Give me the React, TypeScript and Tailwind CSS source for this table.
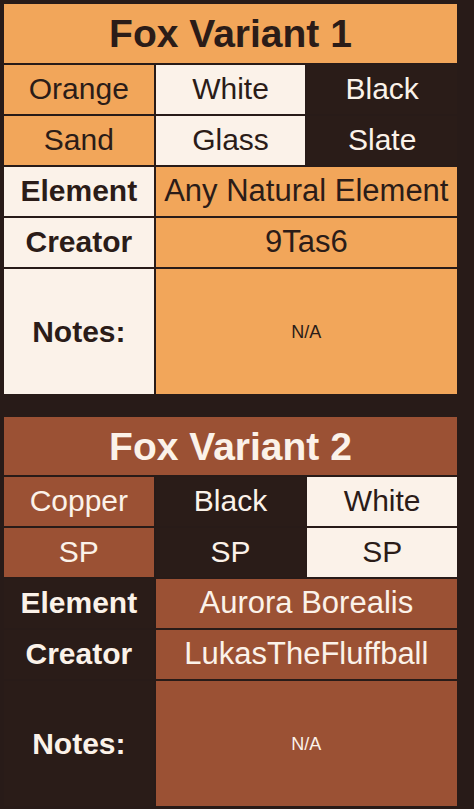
const ORANGE = "bg-[#f2a65a] text-[#2b1c18]";
const LIGHT = "bg-[#fbf2e9] text-[#2b1c18]";
const DARK = "bg-[#2a1c18] text-[#fbf2e9]";
const COPPER = "bg-[#9b5134] text-[#fbf2e9]";

type Variant = {
  title: string;
  headerClass: string;
  colours: [string, string][];
  shades: [string, string][];
  labelClass: string;
  valueClass: string;
  element: string;
  creator: string;
  headerHeight: string;
};

const variants: Variant[] = [
  {
    title: "Fox Variant 1",
    headerClass: ORANGE,
    colours: [
      ["Orange", ORANGE],
      ["White", LIGHT],
      ["Black", DARK],
    ],
    shades: [
      ["Sand", ORANGE],
      ["Glass", LIGHT],
      ["Slate", DARK],
    ],
    labelClass: LIGHT,
    valueClass: ORANGE,
    element: "Any Natural Element",
    creator: "9Tas6",
    headerHeight: "h-[59px]",
  },
  {
    title: "Fox Variant 2",
    headerClass: COPPER,
    colours: [
      ["Copper", COPPER],
      ["Black", DARK],
      ["White", LIGHT],
    ],
    shades: [
      ["SP", COPPER],
      ["SP", DARK],
      ["SP", LIGHT],
    ],
    labelClass: DARK,
    valueClass: COPPER,
    element: "Aurora Borealis",
    creator: "LukasTheFluffball",
    headerHeight: "h-[58px]",
  },
];

function VariantTable({ v }: { v: Variant }) {
  return (
    <div className="grid w-[453px] grid-cols-3 gap-[2px]">
      <div
        className={`col-span-3 flex items-center justify-center text-[39px] font-bold ${v.headerHeight} ${v.headerClass}`}
      >
        {v.title}
      </div>
      {[...v.colours, ...v.shades].map(([name, cls], i) => (
        <div
          key={i}
          className={`flex h-[49px] items-center justify-center pb-[2px] text-[30px] ${cls}`}
        >
          {name}
        </div>
      ))}
      <div className={`flex h-[49px] items-center justify-center pb-[2px] text-[30px] font-bold ${v.labelClass}`}>
        Element
      </div>
      <div className={`col-span-2 flex h-[49px] items-center justify-center pb-[2px] text-[31px] ${v.valueClass}`}>
        {v.element}
      </div>
      <div className={`flex h-[49px] items-center justify-center pb-[2px] text-[30px] font-bold ${v.labelClass}`}>
        Creator
      </div>
      <div className={`col-span-2 flex h-[49px] items-center justify-center pb-[2px] text-[31px] ${v.valueClass}`}>
        {v.creator}
      </div>
      <div className={`flex h-[125px] items-center justify-center text-[30px] font-bold ${v.labelClass}`}>
        Notes:
      </div>
      <div className={`col-span-2 flex h-[125px] items-center justify-center text-[18px] ${v.valueClass}`}>
        N/A
      </div>
    </div>
  );
}

export default function App() {
  return (
    <div className="flex min-h-[809px] w-[474px] flex-col gap-[23px] bg-[#281b18] pl-[4px] pt-[4px] font-['Liberation_Sans',Arial,sans-serif] leading-none">
      {variants.map((v) => (
        <VariantTable key={v.title} v={v} />
      ))}
    </div>
  );
}
